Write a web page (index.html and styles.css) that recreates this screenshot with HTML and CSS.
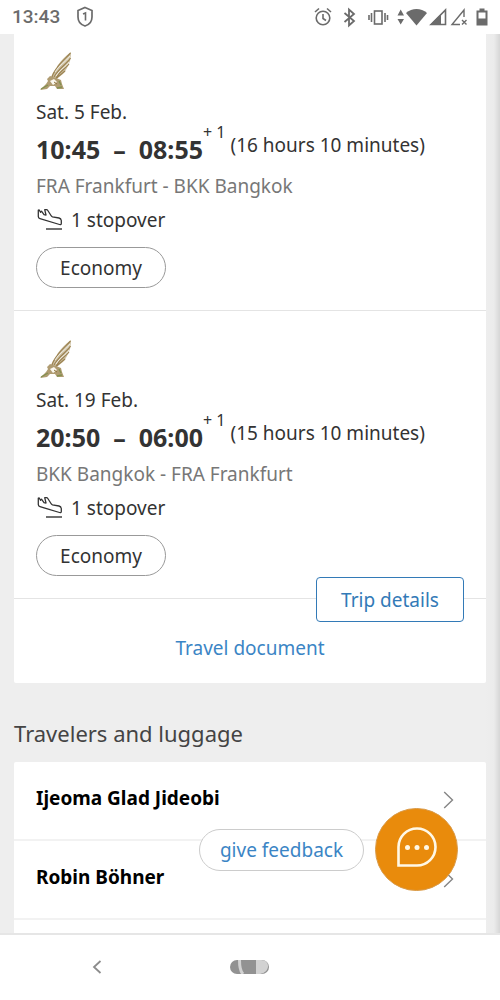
FILE: index.html
```html
<!DOCTYPE html>
<html lang="en">
<head>
<meta charset="utf-8">
<meta name="viewport" content="width=device-width, initial-scale=1">
<title>Trip overview</title>
<link rel="stylesheet" href="styles.css">
</head>
<body>
<svg class="defs" aria-hidden="true">
  <symbol id="falcon" viewBox="0 0 40 40">
    <path d="M35 0C29 4 25 9 22 13C19 18 17 20 15 25L20 27C25 24 29 21 31 16C34 11 35 6 35 0Z" fill="#cfc3a6"/>
    <path d="M34.500 1C29 7 24 11 21 16C19 19 17 21 16 25M34.500 6C31 12 24 15 18 25M33 12C29 17 24 19 20 26M29 19C26 22 23 23 20 27" fill="none" stroke="#9c8352" stroke-width="1.200"/>
    <path d="M34 4C30 10 23 13 19 20M33 10C30 15 24 17 20 24" fill="none" stroke="#fff" stroke-width="0.700"/>
    <path d="M11 27L14 24L20 26L25 28L26 32L28 37L21 37L19 34L14 34L11 37L4 38L10 32L12 29Z" fill="#b09c72"/>
    <path d="M14 29L18 27L21 30L17 33Z" fill="#fbf8ef"/>
    <path d="M5 37L12 33M21 36L26 35M23 29L25 33" stroke="#83904f" stroke-width="1.400"/>
    <path d="M18 30L21 32" stroke="#8e7440"/>
  </symbol>
  <symbol id="landing" viewBox="0 0 26 22">
    <path d="M2.300 1.200V7.500Q2.300 9.200 4 9.700L23.500 15.500Q25.300 16 25.300 14.500V11.500Q25 9.500 23 9L16.500 7.800Q15.500 7.500 15 6.500L11.800 1.500Q11.300 0.700 10.500 0.700H8.700L10 6L8 5.600L5.500 2.200L4.500 3.200L3.200 1Z" fill="none" stroke="#333" stroke-width="1.300" stroke-linejoin="round"/>
    <path d="M10 20H26" stroke="#333" stroke-width="1.400"/>
  </symbol>
  <symbol id="chevron" viewBox="0 0 10 18">
    <path d="M0.700 1L9 9L0.700 17" fill="none" stroke="#858585" stroke-width="1.400"/>
  </symbol>
</svg>

<header class="status">
  <div class="status-group">
    <span class="clock">13:43</span>
    <svg width="18" height="22" viewBox="0 0 18 22" aria-hidden="true"><path d="M9 1.500L16 4.500V11C16 15.500 13 18.800 9 20C5 18.800 2 15.500 2 11V4.500Z" fill="none" stroke="#6b6b6b" stroke-width="1.700"/><path d="M7 8L9.500 7V14.500" fill="none" stroke="#6b6b6b" stroke-width="1.600"/></svg>
  </div>
  <svg class="status-icons" width="176" height="22" viewBox="0 0 176 22" aria-hidden="true">
    <g fill="none" stroke="#6b6b6b" stroke-width="1.600">
      <circle cx="9" cy="12" r="6.800"/><path d="M9 8V12.500L12 14.500M1 6L5 2.500M17 6L13 2.500"/>
      <path d="M30.500 7L40 15L35 19.500V3.500L40 8L30.500 16" stroke-width="1.800"/>
      <rect x="60.500" y="5" width="7.500" height="13"/><path d="M57.500 7V16M71 7V16M55 9V14M73.500 9V14"/>
      <path d="M150 11V4L138 18.500H146M148 14L152.500 18.500M152.500 14L148 18.500" stroke-width="1.400"/>
      <path d="M117 18.500L131.500 4V18.500Z"/>
    </g>
    <g fill="#6b6b6b">
      <path d="M83.500 9.500H90L86.700 3.500ZM83.500 13H90L86.700 18.500Z"/>
      <path d="M92 7C98 1.700 107 1.700 113 7L102.500 19.500Z"/>
      <path d="M116 19L127 8V19Z"/>
      <path d="M165.500 2.500H170.500V4.500H173.500V19.500H162.500V4.500H165.500Z"/>
    </g>
    <rect x="164.500" y="6.500" width="7" height="6" fill="#fff"/>
  </svg>
</header>

<main class="screen">
  <div class="content">
    <section class="card">
      <article class="leg">
        <svg class="airline" role="img" aria-label="Airline"><use href="#falcon"/></svg>
        <p class="date">Sat. 5 Feb.</p>
        <div class="times"><strong class="time">10:45</strong><strong class="dash">–</strong><strong class="time">08:55</strong><span class="plus">+ 1</span><span class="duration">(16 hours 10 minutes)</span></div>
        <p class="route">FRA Frankfurt - BKK Bangkok</p>
        <p class="stop"><svg class="landing" aria-hidden="true"><use href="#landing"/></svg>1 stopover</p>
        <span class="cabin">Economy</span>
      </article>
      <article class="leg">
        <svg class="airline" role="img" aria-label="Airline"><use href="#falcon"/></svg>
        <p class="date">Sat. 19 Feb.</p>
        <div class="times"><strong class="time">20:50</strong><strong class="dash">–</strong><strong class="time">06:00</strong><span class="plus">+ 1</span><span class="duration">(15 hours 10 minutes)</span></div>
        <p class="route">BKK Bangkok - FRA Frankfurt</p>
        <p class="stop"><svg class="landing" aria-hidden="true"><use href="#landing"/></svg>1 stopover</p>
        <span class="cabin">Economy</span>
        <button class="details" type="button">Trip details</button>
      </article>
      <div class="document"><a href="#">Travel document</a></div>
    </section>
    <h2 class="heading">Travelers and luggage</h2>
    <section class="card">
      <button class="traveler" type="button">Ijeoma Glad Jideobi<svg class="chevron" aria-hidden="true"><use href="#chevron"/></svg></button>
      <button class="traveler" type="button">Robin Böhner<svg class="chevron" aria-hidden="true"><use href="#chevron"/></svg></button>
      <div class="next"></div>
    </section>
  </div>
  <div class="floating">
    <button class="feedback" type="button">give feedback</button>
    <button class="chat" type="button" aria-label="Chat">
      <svg width="40" height="40" viewBox="0 0 40 40" aria-hidden="true"><path d="M1.500 38.500V20A18.500 18.500 0 1 1 20 38.500Z" fill="none" stroke="#fff8e6" stroke-width="2.600"/><g fill="#fff8e6"><circle cx="10.500" cy="20.500" r="2.500"/><circle cx="20" cy="20.500" r="2.500"/><circle cx="29.500" cy="20.500" r="2.500"/></g></svg>
    </button>
  </div>
</main>

<nav class="navbar">
  <button class="nav-button" type="button" aria-label="Back"><svg width="10" height="14" viewBox="0 0 10 14" aria-hidden="true"><path d="M8.500 1L2 7L8.500 13" fill="none" stroke="#8c8c8c" stroke-width="1.800"/></svg></button>
  <button class="nav-button" type="button" aria-label="Home"><svg width="40" height="14" viewBox="0 0 40 14" aria-hidden="true"><rect width="39" height="14" rx="7" fill="#929292"/><path d="M26 0H31C36 0 38 3 38 6C38 10 35 13 30 14H26Z" fill="#d2d2d2"/><path d="M9.500 0C9.500 7 10 11 13 14" fill="none" stroke="#d2d2d2" stroke-width="3"/></svg></button>
  <span></span>
</nav>
</body>
</html>
```
FILE: styles.css
```css
* { box-sizing: border-box; }
body {
  margin: 0;
  height: 100vh;
  display: flex;
  flex-direction: column;
  background: #fff;
  color: #333;
  font: 19px/28px "Noto Sans", sans-serif;
}
p, h2 { margin: 0; }
button { font: inherit; cursor: pointer; }
.defs { position: absolute; width: 0; height: 0; }

.status {
  flex: none;
  height: 34px;
  padding: 0 10px 0 12px;
  display: flex;
  align-items: center;
  justify-content: space-between;
}
.status-group { display: flex; align-items: center; gap: 16px; }
.clock { font: 500 19px/22px Roboto, sans-serif; color: #6b6b6b; }

.screen {
  flex: 1;
  min-height: 0;
  position: relative;
  overflow: hidden;
  padding: 0 14px;
  background: linear-gradient(to left, #d6d6d6, #ebebeb 6px, #eee 14px);
}
.content { margin-top: -11px; }
.card { background: #fff; border-radius: 2px; }

.leg {
  position: relative;
  padding: 29px 22px 22px;
  border-bottom: 1px solid #e4e4e4;
}
.airline { display: block; width: 40px; height: 40px; margin-bottom: 6px; }
.times {
  height: 46px;
  display: flex;
  align-items: center;
  white-space: nowrap;
}
.time, .dash { font-size: 25px; font-weight: 700; }
.dash { margin: 0 13px; }
.plus { font-size: 16px; align-self: flex-start; line-height: 12px; }
.duration { margin-left: 5px; padding-bottom: 8px; }
.route { color: #777; }
.stop { display: flex; align-items: center; gap: 9px; margin: 6px 0 13px; }
.landing { width: 26px; height: 22px; }
.cabin {
  display: flex;
  align-items: center;
  justify-content: center;
  width: 130px;
  height: 41px;
  border: 1px solid #999;
  border-radius: 21px;
}
.details {
  position: absolute;
  right: 22px;
  bottom: -24px;
  width: 148px;
  height: 45px;
  padding: 0;
  background: #fff;
  border: 1px solid #337ab7;
  border-radius: 4px;
  color: #337ab7;
}
.document { padding: 35px 22px 21px; text-align: center; }
.document a { color: #3b85c5; text-decoration: none; }
.heading {
  padding: 34px 0 13px;
  font-size: 22px;
  line-height: 32px;
  font-weight: 400;
  color: #444;
}
.traveler {
  width: 100%;
  height: 79px;
  padding: 0 32px 6px 22px;
  display: flex;
  align-items: center;
  justify-content: space-between;
  background: none;
  border: 0;
  border-bottom: 2px solid #f2f2f2;
  color: #000;
  font-weight: 700;
}
.chevron { width: 11px; height: 18px; margin-top: 4px; }
.next { height: 40px; }

.floating {
  position: absolute;
  right: 42px;
  bottom: 42px;
  display: flex;
  align-items: center;
  gap: 11px;
}
.feedback {
  width: 165px;
  height: 42px;
  padding: 0;
  background: #fff;
  border: 1px solid #ccc;
  border-radius: 21px;
  color: #3b85c5;
}
.chat {
  width: 83px;
  height: 83px;
  padding: 0 0 6px;
  display: flex;
  align-items: center;
  justify-content: center;
  background: #e98b0c;
  border: 1px solid #d99a48;
  border-radius: 50%;
}

.navbar {
  flex: none;
  height: 67px;
  padding: 0 20px 2px;
  display: grid;
  grid-template-columns: 1fr 1fr 1fr;
  align-items: center;
  border-top: 2px solid #e6e6e6;
}
.nav-button {
  display: flex;
  justify-content: center;
  padding: 0;
  background: none;
  border: 0;
}
```
